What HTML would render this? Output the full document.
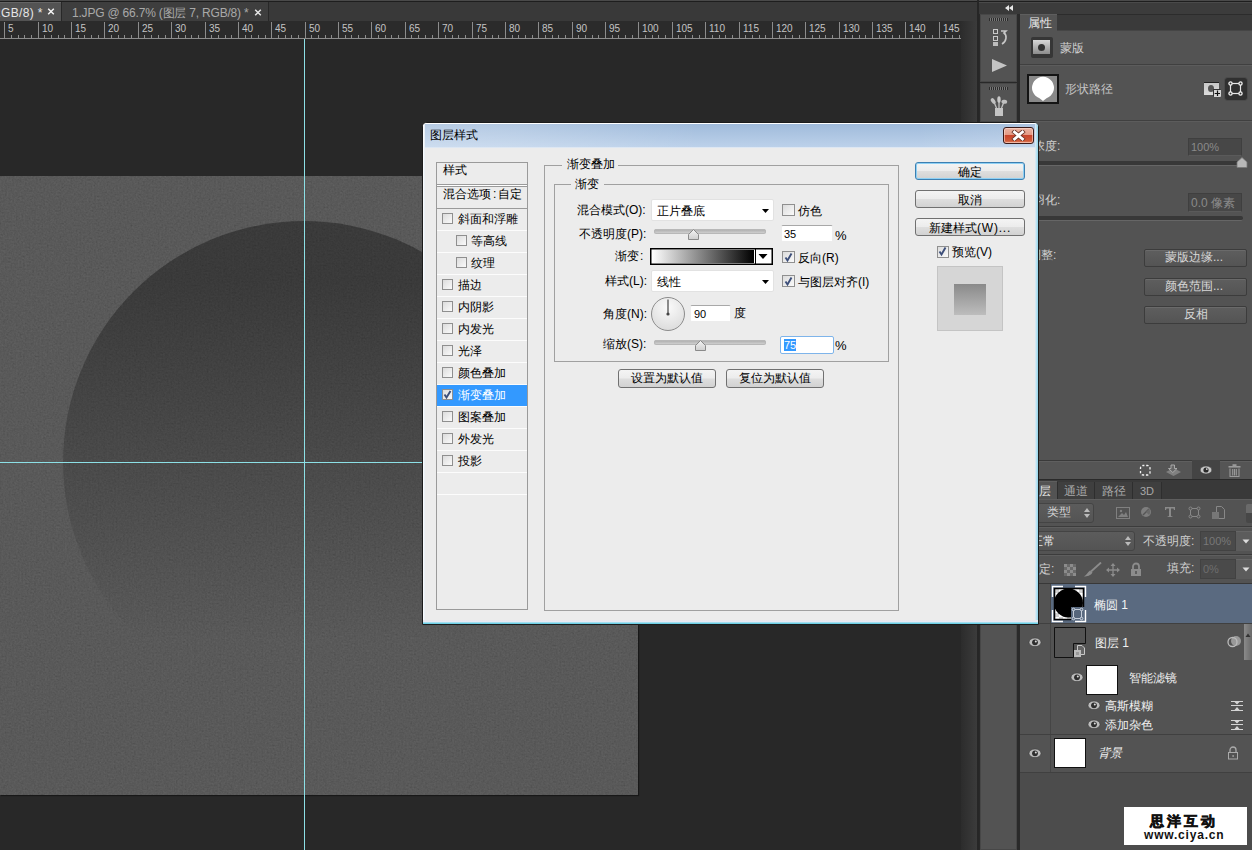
<!DOCTYPE html>
<html><head><meta charset="utf-8">
<style>
*{margin:0;padding:0;box-sizing:border-box}
html,body{width:1252px;height:850px;overflow:hidden;background:#282828;font-family:"Liberation Sans",sans-serif;font-size:12px;position:relative}
.a{position:absolute}
.t{position:absolute;white-space:nowrap;line-height:1}
.cb{position:absolute;width:11px;height:11px;border:1px solid #8f8f8f;background:linear-gradient(135deg,#dcdcdc,#fafafa)}
.dd{background:#fff;border:1px solid #e2e2e2;border-radius:2px}
.sl{background:linear-gradient(#a8a8a8,#d8d8d8);border-radius:3px;box-shadow:inset 0 0 0 1px #b8b8b8}
.inp{background:#fff;border:1px solid #ececec;border-top-color:#a8a8a8;border-radius:2px}
.wbtn{border:1px solid #707070;border-radius:3px;background:linear-gradient(#f4f4f4 0%,#ececec 48%,#dedede 52%,#d2d2d2 100%)}
.btn{background:linear-gradient(#5e5e5e,#545454);border:1px solid #3c3c3c;border-radius:2px;box-shadow:inset 0 1px 0 #6a6a6a}
</style></head><body>
<!-- top strip -->
<div class="a" style="left:0;top:0;width:1252px;height:1px;background:#4a4a4a"></div>
<div class="a" style="left:0;top:1px;width:1252px;height:1px;background:#1e1e1e"></div>
<!-- tab bar -->
<div class="a" id="tabbar" style="left:0;top:2px;width:977px;height:19px;background:#393939"></div>
<div class="a" style="left:0;top:2px;width:61px;height:19px;background:#535353;border-top:1px solid #646464"></div>
<div class="a" style="left:61px;top:2px;width:1px;height:19px;background:#282828"></div>
<div class="a" style="left:62px;top:2px;width:206px;height:19px;background:#3e3e3e"></div>
<div class="a" style="left:268px;top:2px;width:1px;height:19px;background:#282828"></div>
<div class="t" style="left:-8px;top:7px;font-size:12px;color:#e6e6e6;letter-spacing:0.35px">RGB/8) *</div>
<div class="t" style="left:72px;top:7px;font-size:12px;color:#a9a9a9;letter-spacing:-0.2px">1.JPG @ 66.7% (图层 7, RGB/8) *</div>
<svg class="a" style="left:47px;top:8px" width="8" height="7"><path d="M1.2 0.8L6.8 6.2M6.8 0.8L1.2 6.2" stroke="#f4f4f4" stroke-width="1.5"/></svg>
<svg class="a" style="left:254px;top:9px" width="8" height="7"><path d="M1.2 0.8L6.8 6.2M6.8 0.8L1.2 6.2" stroke="#e6e6e6" stroke-width="1.5"/></svg>
<!-- ruler -->
<div class="a" id="ruler" style="left:0;top:21px;width:961px;height:18px;background:#2b2b2b"></div>
<svg class="a" style="left:0;top:21px" width="961" height="18"><g fill="#8c8c8c"><rect x="4" y="1" width="1" height="16"/>
<rect x="11" y="14" width="1" height="3"/>
<rect x="18" y="14" width="1" height="3"/>
<rect x="24" y="14" width="1" height="3"/>
<rect x="31" y="14" width="1" height="3"/>
<text style="display:none" x="8" y="11">5</text>
<rect x="38" y="1" width="1" height="16"/>
<rect x="44" y="14" width="1" height="3"/>
<rect x="51" y="14" width="1" height="3"/>
<rect x="58" y="14" width="1" height="3"/>
<rect x="64" y="14" width="1" height="3"/>
<text style="display:none" x="42" y="11">10</text>
<rect x="71" y="1" width="1" height="16"/>
<rect x="78" y="14" width="1" height="3"/>
<rect x="84" y="14" width="1" height="3"/>
<rect x="91" y="14" width="1" height="3"/>
<rect x="98" y="14" width="1" height="3"/>
<text style="display:none" x="75" y="11">15</text>
<rect x="104" y="1" width="1" height="16"/>
<rect x="111" y="14" width="1" height="3"/>
<rect x="118" y="14" width="1" height="3"/>
<rect x="124" y="14" width="1" height="3"/>
<rect x="131" y="14" width="1" height="3"/>
<text style="display:none" x="108" y="11">20</text>
<rect x="138" y="1" width="1" height="16"/>
<rect x="144" y="14" width="1" height="3"/>
<rect x="151" y="14" width="1" height="3"/>
<rect x="158" y="14" width="1" height="3"/>
<rect x="165" y="14" width="1" height="3"/>
<text style="display:none" x="142" y="11">25</text>
<rect x="171" y="1" width="1" height="16"/>
<rect x="178" y="14" width="1" height="3"/>
<rect x="185" y="14" width="1" height="3"/>
<rect x="191" y="14" width="1" height="3"/>
<rect x="198" y="14" width="1" height="3"/>
<text style="display:none" x="175" y="11">30</text>
<rect x="205" y="1" width="1" height="16"/>
<rect x="211" y="14" width="1" height="3"/>
<rect x="218" y="14" width="1" height="3"/>
<rect x="225" y="14" width="1" height="3"/>
<rect x="231" y="14" width="1" height="3"/>
<text style="display:none" x="209" y="11">35</text>
<rect x="238" y="1" width="1" height="16"/>
<rect x="245" y="14" width="1" height="3"/>
<rect x="251" y="14" width="1" height="3"/>
<rect x="258" y="14" width="1" height="3"/>
<rect x="265" y="14" width="1" height="3"/>
<text style="display:none" x="242" y="11">40</text>
<rect x="271" y="1" width="1" height="16"/>
<rect x="278" y="14" width="1" height="3"/>
<rect x="285" y="14" width="1" height="3"/>
<rect x="291" y="14" width="1" height="3"/>
<rect x="298" y="14" width="1" height="3"/>
<text style="display:none" x="275" y="11">45</text>
<rect x="305" y="1" width="1" height="16"/>
<rect x="311" y="14" width="1" height="3"/>
<rect x="318" y="14" width="1" height="3"/>
<rect x="325" y="14" width="1" height="3"/>
<rect x="331" y="14" width="1" height="3"/>
<text style="display:none" x="309" y="11">50</text>
<rect x="338" y="1" width="1" height="16"/>
<rect x="345" y="14" width="1" height="3"/>
<rect x="351" y="14" width="1" height="3"/>
<rect x="358" y="14" width="1" height="3"/>
<rect x="365" y="14" width="1" height="3"/>
<text style="display:none" x="342" y="11">55</text>
<rect x="371" y="1" width="1" height="16"/>
<rect x="378" y="14" width="1" height="3"/>
<rect x="385" y="14" width="1" height="3"/>
<rect x="391" y="14" width="1" height="3"/>
<rect x="398" y="14" width="1" height="3"/>
<text style="display:none" x="375" y="11">60</text>
<rect x="405" y="1" width="1" height="16"/>
<rect x="411" y="14" width="1" height="3"/>
<rect x="418" y="14" width="1" height="3"/>
<rect x="425" y="14" width="1" height="3"/>
<rect x="432" y="14" width="1" height="3"/>
<text style="display:none" x="409" y="11">65</text>
<rect x="438" y="1" width="1" height="16"/>
<rect x="445" y="14" width="1" height="3"/>
<rect x="452" y="14" width="1" height="3"/>
<rect x="458" y="14" width="1" height="3"/>
<rect x="465" y="14" width="1" height="3"/>
<text style="display:none" x="442" y="11">70</text>
<rect x="472" y="1" width="1" height="16"/>
<rect x="478" y="14" width="1" height="3"/>
<rect x="485" y="14" width="1" height="3"/>
<rect x="492" y="14" width="1" height="3"/>
<rect x="498" y="14" width="1" height="3"/>
<text style="display:none" x="476" y="11">75</text>
<rect x="505" y="1" width="1" height="16"/>
<rect x="512" y="14" width="1" height="3"/>
<rect x="518" y="14" width="1" height="3"/>
<rect x="525" y="14" width="1" height="3"/>
<rect x="532" y="14" width="1" height="3"/>
<text style="display:none" x="509" y="11">80</text>
<rect x="538" y="1" width="1" height="16"/>
<rect x="545" y="14" width="1" height="3"/>
<rect x="552" y="14" width="1" height="3"/>
<rect x="558" y="14" width="1" height="3"/>
<rect x="565" y="14" width="1" height="3"/>
<text style="display:none" x="542" y="11">85</text>
<rect x="572" y="1" width="1" height="16"/>
<rect x="578" y="14" width="1" height="3"/>
<rect x="585" y="14" width="1" height="3"/>
<rect x="592" y="14" width="1" height="3"/>
<rect x="598" y="14" width="1" height="3"/>
<text style="display:none" x="576" y="11">90</text>
<rect x="605" y="1" width="1" height="16"/>
<rect x="612" y="14" width="1" height="3"/>
<rect x="618" y="14" width="1" height="3"/>
<rect x="625" y="14" width="1" height="3"/>
<rect x="632" y="14" width="1" height="3"/>
<text style="display:none" x="609" y="11">95</text>
<rect x="638" y="1" width="1" height="16"/>
<rect x="645" y="14" width="1" height="3"/>
<rect x="652" y="14" width="1" height="3"/>
<rect x="658" y="14" width="1" height="3"/>
<rect x="665" y="14" width="1" height="3"/>
<text style="display:none" x="642" y="11">100</text>
<rect x="672" y="1" width="1" height="16"/>
<rect x="678" y="14" width="1" height="3"/>
<rect x="685" y="14" width="1" height="3"/>
<rect x="692" y="14" width="1" height="3"/>
<rect x="699" y="14" width="1" height="3"/>
<text style="display:none" x="676" y="11">105</text>
<rect x="705" y="1" width="1" height="16"/>
<rect x="712" y="14" width="1" height="3"/>
<rect x="719" y="14" width="1" height="3"/>
<rect x="725" y="14" width="1" height="3"/>
<rect x="732" y="14" width="1" height="3"/>
<text style="display:none" x="709" y="11">110</text>
<rect x="739" y="1" width="1" height="16"/>
<rect x="745" y="14" width="1" height="3"/>
<rect x="752" y="14" width="1" height="3"/>
<rect x="759" y="14" width="1" height="3"/>
<rect x="765" y="14" width="1" height="3"/>
<text style="display:none" x="743" y="11">115</text>
<rect x="772" y="1" width="1" height="16"/>
<rect x="779" y="14" width="1" height="3"/>
<rect x="785" y="14" width="1" height="3"/>
<rect x="792" y="14" width="1" height="3"/>
<rect x="799" y="14" width="1" height="3"/>
<text style="display:none" x="776" y="11">120</text>
<rect x="805" y="1" width="1" height="16"/>
<rect x="812" y="14" width="1" height="3"/>
<rect x="819" y="14" width="1" height="3"/>
<rect x="825" y="14" width="1" height="3"/>
<rect x="832" y="14" width="1" height="3"/>
<text style="display:none" x="809" y="11">125</text>
<rect x="839" y="1" width="1" height="16"/>
<rect x="845" y="14" width="1" height="3"/>
<rect x="852" y="14" width="1" height="3"/>
<rect x="859" y="14" width="1" height="3"/>
<rect x="865" y="14" width="1" height="3"/>
<text style="display:none" x="843" y="11">130</text>
<rect x="872" y="1" width="1" height="16"/>
<rect x="879" y="14" width="1" height="3"/>
<rect x="885" y="14" width="1" height="3"/>
<rect x="892" y="14" width="1" height="3"/>
<rect x="899" y="14" width="1" height="3"/>
<text style="display:none" x="876" y="11">135</text>
<rect x="905" y="1" width="1" height="16"/>
<rect x="912" y="14" width="1" height="3"/>
<rect x="919" y="14" width="1" height="3"/>
<rect x="925" y="14" width="1" height="3"/>
<rect x="932" y="14" width="1" height="3"/>
<text style="display:none" x="909" y="11">140</text>
<rect x="939" y="1" width="1" height="16"/>
<rect x="945" y="14" width="1" height="3"/>
<rect x="952" y="14" width="1" height="3"/>
<rect x="959" y="14" width="1" height="3"/>
<text style="display:none" x="943" y="11">145</text></g>
<rect x="0" y="17" width="961" height="1" fill="#8c8c8c"/>
<g fill="#c4c4c4" font-family="Liberation Sans" font-size="10"><text x="8" y="11">5</text><text x="42" y="11">10</text><text x="75" y="11">15</text><text x="108" y="11">20</text><text x="142" y="11">25</text><text x="175" y="11">30</text><text x="209" y="11">35</text><text x="242" y="11">40</text><text x="275" y="11">45</text><text x="309" y="11">50</text><text x="342" y="11">55</text><text x="375" y="11">60</text><text x="409" y="11">65</text><text x="442" y="11">70</text><text x="476" y="11">75</text><text x="509" y="11">80</text><text x="542" y="11">85</text><text x="576" y="11">90</text><text x="609" y="11">95</text><text x="642" y="11">100</text><text x="676" y="11">105</text><text x="709" y="11">110</text><text x="743" y="11">115</text><text x="776" y="11">120</text><text x="809" y="11">125</text><text x="843" y="11">130</text><text x="876" y="11">135</text><text x="909" y="11">140</text><text x="943" y="11">145</text></g></svg>
<!-- canvas right scrollbar zone -->
<div class="a" style="left:961px;top:21px;width:16px;height:829px;background:linear-gradient(90deg,#2c2c2c,#3b3b3b)"></div>
<div class="a" style="left:977px;top:0;width:2px;height:850px;background:#262626"></div>
<!-- canvas image -->
<div class="a" id="img" style="left:0;top:176px;width:638px;height:619px;background:#414141;overflow:hidden;box-shadow:1px 1px 1px rgba(0,0,0,.4)">
  <svg class="a" style="left:0;top:0" width="639" height="619"><filter id="nz" x="0" y="0" width="100%" height="100%"><feTurbulence type="fractalNoise" baseFrequency="0.55" numOctaves="2" seed="3"/><feColorMatrix type="matrix" values="0.33 0.33 0.33 0 0  0.33 0.33 0.33 0 0  0.33 0.33 0.33 0 0  0 0 0 0 1"/></filter><rect width="639" height="619" filter="url(#nz)" opacity="0.2"/></svg>
  <div class="a" style="left:63px;top:45px;width:482px;height:482px;border-radius:50%;background:linear-gradient(rgba(0,0,0,.35) 12.45%,rgba(0,0,0,0) 87.55%)"></div>
</div>
<!-- guides -->
<div class="a" style="left:304px;top:39px;width:1px;height:811px;background:#8ce0e6"></div>
<div class="a" style="left:0;top:462px;width:961px;height:1px;background:#8ce0e6"></div>
<!-- icon strip -->
<div class="a" style="left:979px;top:2px;width:41px;height:12px;background:#393939"></div>
<svg class="a" style="left:1005px;top:5px" width="9" height="6"><path d="M0 3L4 0V6ZM4 3L8 0V6Z" fill="#e8e8e8"/></svg>
<div class="a" style="left:980px;top:14px;width:37px;height:68px;background:#535353;border:1px solid #474747"></div>
<div class="a" style="left:980px;top:83px;width:37px;height:39px;background:#535353;border:1px solid #474747"></div>
<div class="a" style="left:980px;top:123px;width:37px;height:727px;background:#535353;border:1px solid #474747"></div>
<svg class="a" style="left:980px;top:14px" width="37" height="110">
 <g fill="#2c2c2c"><rect x="9" y="4" width="19" height="3"/><rect x="9" y="73" width="19" height="3"/></g>
 <g fill="#777"><rect x="10" y="4" width="1" height="3"/><rect x="12" y="4" width="1" height="3"/><rect x="14" y="4" width="1" height="3"/><rect x="16" y="4" width="1" height="3"/><rect x="18" y="4" width="1" height="3"/><rect x="20" y="4" width="1" height="3"/><rect x="22" y="4" width="1" height="3"/><rect x="24" y="4" width="1" height="3"/><rect x="26" y="4" width="1" height="3"/>
 <rect x="10" y="73" width="1" height="3"/><rect x="12" y="73" width="1" height="3"/><rect x="14" y="73" width="1" height="3"/><rect x="16" y="73" width="1" height="3"/><rect x="18" y="73" width="1" height="3"/><rect x="20" y="73" width="1" height="3"/><rect x="22" y="73" width="1" height="3"/><rect x="24" y="73" width="1" height="3"/><rect x="26" y="73" width="1" height="3"/></g>
 <g fill="none" stroke="#c8c8c8" stroke-width="1"><rect x="13.5" y="15.5" width="4" height="4"/><rect x="13.5" y="22.5" width="4" height="4"/></g>
 <rect x="13" y="28" width="5" height="4" fill="#bdbdbd"/>
 <path d="M21 17H26L24 19C27 21 27 27 22 30" fill="none" stroke="#c8c8c8" stroke-width="1.6"/>
 <path d="M12 45L27 51.5L12 58Z" fill="#c4c4c4"/>
 <rect x="15" y="94" width="8" height="8" fill="#c4c4c4"/>
 <path d="M19 94V86M16.5 94L14 88M21.5 94L23.5 89" stroke="#c0c0c0" stroke-width="1.3"/>
 <ellipse cx="19" cy="85.5" rx="1.7" ry="3.2" fill="#c8c8c8"/>
 <ellipse cx="13.2" cy="87" rx="1.9" ry="3.2" fill="#c0c0c0" transform="rotate(-35 13.2 87)"/>
 <ellipse cx="24.3" cy="87.8" rx="2.9" ry="2" fill="#c0c0c0" transform="rotate(10 24.3 87.8)"/>
</svg>
<div class="a" style="left:1017px;top:14px;width:3px;height:836px;background:#2a2a2a"></div><div class="a" style="left:979px;top:2px;width:273px;height:1px;background:#4a4a4a"></div>
<!-- right panel -->
<div class="a" style="left:1020px;top:2px;width:232px;height:1px;background:#4a4a4a"></div>
<div class="a" style="left:1020px;top:3px;width:232px;height:11px;background:#3c3c3c"></div>
<div class="a" style="left:1020px;top:14px;width:232px;height:17px;background:#3a3a3a;border-top:1px solid #2c2c2c;border-bottom:1px solid #454545"></div>
<div class="a" style="left:1020px;top:14px;width:232px;height:836px;background:#535353;top:31px"></div>
<div class="a" style="left:1020px;top:14px;width:37px;height:17px;background:#535353;border-top:1px solid #5e5e5e"></div>
<div class="t" style="left:1028px;top:17px;color:#e8e8e8">属性</div>
<!-- mask icon -->
<div class="a" style="left:1031px;top:37px;width:22px;height:21px;background:#363636;border-radius:2px"></div>
<div class="a" style="left:1033px;top:40px;width:17px;height:14px;background:linear-gradient(#d8d8d8,#8c8c8c)"></div>
<div class="a" style="left:1038px;top:44px;width:7px;height:7px;border-radius:50%;background:#333"></div>
<div class="t" style="left:1060px;top:42px;color:#cfcfcf">蒙版</div>
<div class="a" style="left:1020px;top:64px;width:232px;height:1px;background:#404040"></div>
<div class="a" style="left:1020px;top:65px;width:232px;height:1px;background:#5c5c5c"></div>
<!-- shape thumb -->
<div class="a" style="left:1027px;top:74px;width:32px;height:30px;background:#898989;border:2px solid #141414"></div>
<svg class="a" style="left:1027px;top:74px" width="32" height="30"><path d="M16 27L12.5 24.2A11 11 0 1 1 19.5 24.2Z" fill="#fff"/></svg>
<div class="t" style="left:1065px;top:83px;color:#c4c4c4">形状路径</div>
<!-- add mask icon -->
<div class="a" style="left:1204px;top:82px;width:15px;height:13px;background:linear-gradient(#c8c8c8,#dcdcdc);border-top:1px solid #222"></div>
<div class="a" style="left:1208px;top:85px;width:6px;height:7px;border-radius:50%;background:#555"></div>
<div class="a" style="left:1213px;top:89px;width:8px;height:8px;background:#d6d6d6;border-radius:1px;border-left:1px solid #333;border-top:1px solid #333"></div>
<svg class="a" style="left:1213px;top:89px" width="8" height="8"><path d="M4.5 1.5V7M1.7 4.5H7" stroke="#111" stroke-width="1.2"/></svg>
<!-- vector mask icon -->
<div class="a" style="left:1225px;top:78px;width:22px;height:22px;background:#303030;border-radius:3px;box-shadow:0 0 0 1px #4a4a4a"></div>
<svg class="a" style="left:1225px;top:78px" width="22" height="22"><rect x="5.5" y="5.5" width="10" height="10" fill="none" stroke="#e6e6e6" stroke-width="1.2"/><g fill="#303030" stroke="#f0f0f0" stroke-width="1.3"><circle cx="5.5" cy="5.5" r="1.6"/><circle cx="15.5" cy="5.5" r="1.6"/><circle cx="5.5" cy="15.5" r="1.6"/><circle cx="15.5" cy="15.5" r="1.6"/></g></svg>
<div class="a" style="left:1020px;top:120px;width:232px;height:1px;background:#404040"></div>
<div class="a" style="left:1020px;top:121px;width:232px;height:1px;background:#5c5c5c"></div>
<!-- density / feather -->
<div class="t" style="left:1033px;top:140px;color:#cfcfcf">浓度:</div>
<div class="a" style="left:1188px;top:138px;width:54px;height:18px;background:#474747;border:1px solid #3f3f3f;border-bottom-color:#5a5a5a"></div>
<div class="t" style="left:1191px;top:142px;color:#8a8a8a;font-size:11px">100%</div>
<div class="a" style="left:1020px;top:161px;width:226px;height:5px;background:#383838;border-radius:2px;border-bottom:1px solid #666"></div>
<svg class="a" style="left:1236px;top:157px" width="12" height="11"><path d="M6 0.5L11 5V10.5H1V5Z" fill="#b8b8b8" stroke="#777" stroke-width="0.8"/></svg>
<div class="t" style="left:1033px;top:194px;color:#cfcfcf">羽化:</div>
<div class="a" style="left:1188px;top:193px;width:54px;height:19px;background:#474747;border:1px solid #3f3f3f;border-bottom-color:#5a5a5a"></div>
<div class="t" style="left:1191px;top:197px;color:#8a8a8a;font-size:12px">0.0 像素</div>
<div class="a" style="left:1020px;top:216px;width:223px;height:5px;background:#383838;border-radius:2px;border-bottom:1px solid #666"></div>
<div class="t" style="left:1029px;top:249px;color:#cfcfcf">调整:</div>
<div class="a btn" style="left:1144px;top:249px;width:103px;height:18px"></div>
<div class="t" style="left:1165px;top:251px;color:#d8d8d8">蒙版边缘...</div>
<div class="a btn" style="left:1144px;top:278px;width:103px;height:18px"></div>
<div class="t" style="left:1165px;top:280px;color:#d8d8d8">颜色范围...</div>
<div class="a btn" style="left:1144px;top:306px;width:103px;height:18px"></div>
<div class="t" style="left:1184px;top:308px;color:#d8d8d8">反相</div>

<!-- props bottom toolbar -->
<div class="a" style="left:1020px;top:460px;width:232px;height:19px;background:#555;border-top:1px solid #3a3a3a;box-shadow:inset 0 1px 0 #5f5f5f"></div>
<div class="a" style="left:1192px;top:460px;width:28px;height:19px;background:#444"></div>
<svg class="a" style="left:1139px;top:464px" width="13" height="12"><rect x="1.5" y="1.5" width="9.5" height="9.5" rx="2.5" fill="none" stroke="#f4f4f4" stroke-width="1.3" stroke-dasharray="2.4 1.8" stroke-dashoffset="1"/></svg>
<svg class="a" style="left:1165px;top:464px" width="17" height="13"><path d="M1 8L8.5 4L16 8L8.5 12Z" fill="#808080"/><path d="M6 1H9.5V4.5H12L7.8 8.5L3.5 4.5H6Z" fill="#666" stroke="#b0b0b0" stroke-width="0.9"/></svg>
<svg class="a" style="left:1199px;top:465px" width="14" height="10"><ellipse cx="7" cy="5" rx="5.8" ry="3.9" fill="#c8c8c8" stroke="#3a3a3a" stroke-width="0.5"/><circle cx="7" cy="5" r="2.6" fill="#2a2a2a"/><circle cx="7.8" cy="4.1" r="0.9" fill="#ddd"/></svg>
<svg class="a" style="left:1228px;top:464px" width="13" height="13"><g fill="#9a9a9a"><rect x="0.5" y="2" width="12" height="1.6"/><rect x="4.5" y="0.2" width="4" height="1.8"/></g><g fill="none" stroke="#9a9a9a" stroke-width="1.1"><path d="M2 4.5V12.5H11V4.5M4.7 5V11.5M6.5 5V11.5M8.3 5V11.5"/></g></svg>
<!-- layers tabs -->
<div class="a" style="left:1020px;top:479px;width:232px;height:20px;background:#393939;border-top:1px solid #2a2a2a"></div>
<div class="a" style="left:1020px;top:481px;width:37px;height:18px;background:#535353;border-top:1px solid #5e5e5e"></div>
<div class="a" style="left:1057px;top:482px;width:37px;height:17px;background:#3f3f3f;border-left:1px solid #2e2e2e"></div>
<div class="a" style="left:1094px;top:482px;width:38px;height:17px;background:#3f3f3f;border-left:1px solid #2e2e2e"></div>
<div class="a" style="left:1132px;top:482px;width:30px;height:17px;background:#3f3f3f;border-left:1px solid #2e2e2e;border-right:1px solid #2e2e2e"></div>
<div class="t" style="left:1027px;top:485px;color:#e8e8e8">图层</div>
<div class="t" style="left:1064px;top:485px;color:#a8a8a8">通道</div>
<div class="t" style="left:1102px;top:485px;color:#a8a8a8">路径</div>
<div class="t" style="left:1140px;top:486px;color:#a8a8a8;font-size:11px">3D</div>
<!-- filter row -->
<div class="a" style="left:1020px;top:499px;width:232px;height:28px;background:#535353;box-shadow:inset 0 1px 0 #5e5e5e"></div>
<div class="a" style="left:1020px;top:503px;width:74px;height:20px;background:linear-gradient(#5c5c5c,#545454);border:1px solid #444;border-radius:3px"></div>
<div class="t" style="left:1047px;top:506px;color:#d4d4d4">类型</div>
<svg class="a" style="left:1083px;top:507px" width="8" height="12"><path d="M4 1L7 5H1ZM4 11L7 7H1Z" fill="#bbb"/></svg>
<svg class="a" style="left:1115px;top:506px" width="16" height="14"><rect x="1.5" y="1.5" width="13" height="11" fill="none" stroke="#808080"/><path d="M3 11L7 7L9 9L11 6L13 11Z" fill="#808080"/><circle cx="6" cy="5" r="1.2" fill="#808080"/></svg>
<svg class="a" style="left:1140px;top:506px" width="12" height="12"><circle cx="6" cy="6" r="5" fill="#7e7e7e"/><path d="M3 9L9 3" stroke="#555" stroke-width="1.5"/><path d="M6 6L9 3A5 5 0 0 1 9 9Z" fill="#6a6a6a"/></svg>
<svg class="a" style="left:1164px;top:506px" width="12" height="12"><path d="M1 1H11V4H10L9.5 2.5H7V10L8.5 10.5V11H3.5V10.5L5 10V2.5H2.5L2 4H1Z" fill="#8a8a8a"/></svg>
<svg class="a" style="left:1188px;top:506px" width="13" height="13"><rect x="2.5" y="2.5" width="8" height="8" fill="none" stroke="#888"/><g fill="#535353" stroke="#888"><circle cx="2.5" cy="2.5" r="1.5"/><circle cx="10.5" cy="2.5" r="1.5"/><circle cx="2.5" cy="10.5" r="1.5"/><circle cx="10.5" cy="10.5" r="1.5"/></g></svg>
<svg class="a" style="left:1212px;top:506px" width="13" height="14"><path d="M4.5 0.5H9.5L12.5 3.5V12.5H4.5Z" fill="none" stroke="#888"/><rect x="0" y="6" width="7" height="7" fill="#777"/></svg>
<div class="a" style="left:1246px;top:504px;width:8px;height:19px;background:linear-gradient(#6a6a6a 50%,#474747 50%);border-radius:2px"></div>
<div class="a" style="left:1020px;top:526px;width:232px;height:1px;background:#3c3c3c"></div>
<div class="a" style="left:1020px;top:527px;width:232px;height:1px;background:#5e5e5e"></div>
<!-- blend row -->
<div class="a" style="left:1020px;top:531px;width:115px;height:20px;background:linear-gradient(#5c5c5c,#545454);border:1px solid #444;border-radius:3px"></div>
<div class="t" style="left:1031px;top:535px;color:#e4e4e4">正常</div>
<svg class="a" style="left:1124px;top:535px" width="8" height="12"><path d="M4 1L7 5H1ZM4 11L7 7H1Z" fill="#bbb"/></svg>
<div class="t" style="left:1143px;top:535px;color:#cfcfcf">不透明度:</div>
<div class="a" style="left:1200px;top:531px;width:36px;height:20px;background:#4a4a4a;border:1px solid #424242"></div>
<div class="t" style="left:1203px;top:536px;color:#787878;font-size:11px">100%</div>
<div class="a" style="left:1236px;top:531px;width:16px;height:20px;background:#5c5c5c;border-top:1px solid #666"></div>
<svg class="a" style="left:1242px;top:539px" width="8" height="5"><path d="M0.5 0.5H7.5L4 4.5Z" fill="#ddd"/></svg>
<div class="a" style="left:1020px;top:554px;width:232px;height:1px;background:#3c3c3c"></div>
<div class="a" style="left:1020px;top:555px;width:232px;height:1px;background:#5e5e5e"></div>
<!-- lock row -->
<div class="t" style="left:1027px;top:563px;color:#cfcfcf">锁定:</div>
<svg class="a" style="left:1064px;top:564px" width="12" height="12"><rect width="12" height="12" fill="#8c8c8c"/><g fill="#6a6a6a"><rect x="3" y="0" width="3" height="3"/><rect x="9" y="0" width="3" height="3"/><rect x="0" y="3" width="3" height="3"/><rect x="6" y="3" width="3" height="3"/><rect x="3" y="6" width="3" height="3"/><rect x="9" y="6" width="3" height="3"/><rect x="0" y="9" width="3" height="3"/><rect x="6" y="9" width="3" height="3"/></g></svg>
<svg class="a" style="left:1083px;top:562px" width="19" height="15"><path d="M18 0.5L8 9.5" stroke="#8c8c8c" stroke-width="1.8"/><path d="M1 14.5C4 14.5 8 13.5 9.5 10.5L7 8.5C5 10 4 12.5 1 14.5Z" fill="#8c8c8c"/></svg>
<svg class="a" style="left:1106px;top:563px" width="14" height="14"><path d="M7 1V13M1 7H13" stroke="#8c8c8c" stroke-width="1.3"/><path d="M7 0L9.5 3H4.5ZM7 14L9.5 11H4.5ZM0 7L3 4.5V9.5ZM14 7L11 4.5V9.5Z" fill="#8c8c8c"/></svg>
<svg class="a" style="left:1130px;top:562px" width="12" height="15"><path d="M3 7V4.5A3 3 0 0 1 9 4.5V7" fill="none" stroke="#8c8c8c" stroke-width="1.8"/><rect x="1" y="7" width="10" height="7" fill="#8c8c8c"/><rect x="5.2" y="9" width="1.6" height="3" fill="#555"/></svg>
<div class="t" style="left:1167px;top:562px;color:#cfcfcf">填充:</div>
<div class="a" style="left:1200px;top:559px;width:36px;height:20px;background:#4a4a4a;border:1px solid #424242"></div>
<div class="t" style="left:1203px;top:564px;color:#6e6e6e;font-size:11px">0%</div>
<div class="a" style="left:1236px;top:559px;width:16px;height:20px;background:#5c5c5c;border-top:1px solid #666"></div>
<svg class="a" style="left:1242px;top:567px" width="8" height="5"><path d="M0.5 0.5H7.5L4 4.5Z" fill="#ddd"/></svg>
<div class="a" style="left:1020px;top:583px;width:232px;height:1px;background:#383838"></div>
<!-- layer rows -->
<div class="a" style="left:1020px;top:584px;width:232px;height:266px;background:#4c4c4c"></div>
<div class="a" style="left:1020px;top:584px;width:232px;height:189px;background:#535353"></div>
<div class="a" style="left:1051px;top:584px;width:201px;height:39px;background:#5a6a80"></div>
<div class="a" style="left:1050px;top:584px;width:1px;height:189px;background:#454545"></div>
<div class="a" style="left:1020px;top:623px;width:232px;height:1px;background:#404040"></div>
<div class="a" style="left:1020px;top:734px;width:232px;height:1px;background:#404040"></div>
<div class="a" style="left:1020px;top:772px;width:232px;height:1px;background:#404040"></div>
<!-- ellipse 1 -->
<svg class="a" style="left:1051px;top:585px" width="36" height="38">
 <defs><pattern id="chk" width="8" height="8" patternUnits="userSpaceOnUse" x="4" y="4"><rect width="8" height="8" fill="#fff"/><rect width="4" height="4" fill="#d0d0d0"/><rect x="4" y="4" width="4" height="4" fill="#d0d0d0"/></pattern><clipPath id="tc"><rect x="4" y="4" width="28" height="30"/></clipPath></defs>
 <rect x="3.5" y="3.5" width="29" height="31" fill="url(#chk)" stroke="#000" stroke-width="1.5"/>
 <circle cx="17.5" cy="18" r="14.5" fill="#000" clip-path="url(#tc)"/>
 <rect x="20" y="22" width="14" height="14" fill="#5a6a80"/>
 <rect x="22.5" y="24.5" width="8" height="9" fill="#56667c" stroke="#c4ccd8"/>
 <g fill="#5a6a80" stroke="#d0d8e4"><circle cx="22.5" cy="24.5" r="1.3"/><circle cx="30.5" cy="24.5" r="1.3"/><circle cx="22.5" cy="33.5" r="1.3"/><circle cx="30.5" cy="33.5" r="1.3"/></g>
 <path d="M1.5 12V1.5H12M24 1.5H34.5V12M1.5 25V36.5H12M24 36.5H34.5V25" fill="none" stroke="#fff" stroke-width="1.4"/>
</svg>
<div class="t" style="left:1094px;top:599px;color:#f4f4f4">椭圆 1</div>
<!-- layer 1 -->
<svg class="a" style="left:1028px;top:637px" width="14" height="11"><ellipse cx="7" cy="5.3" rx="6" ry="4.3" fill="#bdbdbd" stroke="#3a3a3a" stroke-width="0.6"/><circle cx="7" cy="5.3" r="2.9" fill="#2e2e2e"/><circle cx="7.8" cy="4.4" r="1" fill="#ddd"/></svg>
<svg class="a" style="left:1054px;top:627px" width="33" height="31"><path d="M0.5 0.5H31.5V16.5H19.5V30.5H0.5Z" fill="#545454" stroke="#111"/><path d="M23.5 18.5H28L30.5 21V27.5H23.5Z" fill="#666" stroke="#c8c8c8"/><rect x="20" y="23" width="7" height="7" fill="#bdbdbd"/><rect x="22" y="25" width="3" height="3" fill="#999"/></svg>
<div class="t" style="left:1095px;top:637px;color:#f0f0f0">图层 1</div>
<svg class="a" style="left:1227px;top:635px" width="15" height="13"><circle cx="9" cy="6" r="5" fill="#999"/><circle cx="5.5" cy="7" r="4.5" fill="none" stroke="#bbb" stroke-width="1.3"/></svg>
<div class="a" style="left:1244px;top:624px;width:8px;height:36px;background:linear-gradient(90deg,#8a8a8a,#6a6a6a)"></div>
<svg class="a" style="left:1245px;top:633px" width="6" height="5"><path d="M3 0.5L5.5 4H0.5Z" fill="#333"/></svg>
<!-- smart filters -->
<svg class="a" style="left:1070px;top:672px" width="14" height="11"><ellipse cx="7" cy="5.3" rx="6" ry="4.3" fill="#bdbdbd" stroke="#3a3a3a" stroke-width="0.6"/><circle cx="7" cy="5.3" r="2.9" fill="#2e2e2e"/><circle cx="7.8" cy="4.4" r="1" fill="#ddd"/></svg>
<div class="a" style="left:1086px;top:665px;width:32px;height:30px;background:#fff;border:1px solid #111"></div>
<div class="t" style="left:1129px;top:672px;color:#f0f0f0">智能滤镜</div>
<svg class="a" style="left:1087px;top:700px" width="14" height="11"><ellipse cx="7" cy="5.3" rx="6" ry="4.3" fill="#bdbdbd" stroke="#3a3a3a" stroke-width="0.6"/><circle cx="7" cy="5.3" r="2.9" fill="#2e2e2e"/><circle cx="7.8" cy="4.4" r="1" fill="#ddd"/></svg>
<div class="t" style="left:1105px;top:700px;color:#f0f0f0">高斯模糊</div>
<svg class="a" style="left:1230px;top:700px" width="14" height="12"><g stroke="#d4d4d4" stroke-width="1"><path d="M1 1.5H13M1 5.5H13M1 10.5H13"/></g><path d="M4.5 2L7 4.5L9.5 2ZM4.5 10L7 7L9.5 10Z" fill="#d4d4d4"/></svg>
<svg class="a" style="left:1087px;top:719px" width="14" height="11"><ellipse cx="7" cy="5.3" rx="6" ry="4.3" fill="#bdbdbd" stroke="#3a3a3a" stroke-width="0.6"/><circle cx="7" cy="5.3" r="2.9" fill="#2e2e2e"/><circle cx="7.8" cy="4.4" r="1" fill="#ddd"/></svg>
<div class="t" style="left:1105px;top:719px;color:#f0f0f0">添加杂色</div>
<svg class="a" style="left:1230px;top:719px" width="14" height="12"><g stroke="#d4d4d4" stroke-width="1"><path d="M1 1.5H13M1 5.5H13M1 10.5H13"/></g><path d="M4.5 2L7 4.5L9.5 2ZM4.5 10L7 7L9.5 10Z" fill="#d4d4d4"/></svg>
<!-- background -->
<svg class="a" style="left:1028px;top:748px" width="14" height="11"><ellipse cx="7" cy="5.3" rx="6" ry="4.3" fill="#bdbdbd" stroke="#3a3a3a" stroke-width="0.6"/><circle cx="7" cy="5.3" r="2.9" fill="#2e2e2e"/><circle cx="7.8" cy="4.4" r="1" fill="#ddd"/></svg>
<div class="a" style="left:1054px;top:738px;width:32px;height:30px;background:#fff;border:1px solid #111"></div>
<div class="t" style="left:1098px;top:747px;color:#f0f0f0;font-style:italic">背景</div>
<svg class="a" style="left:1227px;top:746px" width="12" height="14"><path d="M3 6.5V4A3 3 0 0 1 9 4V6.5" fill="none" stroke="#aaa" stroke-width="1.3"/><rect x="1.5" y="6.5" width="9" height="6.5" fill="none" stroke="#aaa"/><rect x="5.5" y="9" width="1.2" height="2" fill="#aaa"/></svg>
<!-- watermark -->
<div class="a" style="left:1124px;top:807px;width:123px;height:38px;background:#fff"></div>
<div class="t" style="left:1150px;top:814px;color:#111;font-size:14px;font-weight:bold;letter-spacing:3px;-webkit-text-stroke:0.6px #111">思洋互动</div>
<div class="t" style="left:1144px;top:829px;color:#111;font-size:12px;font-weight:bold;letter-spacing:0.8px">www.ciya.cn</div>
<!-- dialog -->
<div class="a" id="dlg" style="left:422px;top:122px;width:617px;height:503px;background:#ececec;border:1px solid #1c1c1c;border-radius:5px 5px 0 0;overflow:hidden">
 <div class="a" style="left:0;top:0;width:615px;height:24px;background:linear-gradient(#a0bbdb,#bcd1ea);border-top:1px solid #fff;border-left:1px solid #fff"></div>
 <div class="a" style="left:0;top:1px;width:615px;height:23px;background:linear-gradient(90deg,rgba(255,255,255,.25) 0%,rgba(255,255,255,.2) 15%,rgba(255,255,255,0) 45%,rgba(255,255,255,0) 80%,rgba(255,255,255,.12) 100%)"></div>
 <div class="a" style="left:0;top:24px;width:615px;height:1px;background:#dde7f3"></div>
 <div class="a" style="left:0;top:0;width:2px;height:501px;background:linear-gradient(90deg,#fff,#e4ecf4)"></div>
 <div class="a" style="left:612px;top:0;width:3px;height:501px;background:linear-gradient(90deg,#e4ecf4,#8fd6ec)"></div>
 <div class="a" style="left:0;top:497px;width:615px;height:4px;background:linear-gradient(#ece6ea,#e8eaf4 40%,#7fd6ea 75%,#5cc8e0)"></div>
</div>
<div class="t" style="left:430px;top:129px;color:#000">图层样式</div>
<!-- close btn -->
<div class="a" style="left:1003px;top:127px;width:31px;height:17px;border:1px solid #3a1a18;border-radius:3px;background:linear-gradient(#eab4a4 0%,#e49a84 45%,#c8452c 50%,#d05a38 85%,#e08868 100%);box-shadow:inset 0 0 0 1px rgba(255,220,210,.6)"></div>
<svg class="a" style="left:1011px;top:130px" width="15" height="11"><path d="M3.5 2L7.5 5.3L11.5 2M3.5 9L7.5 5.7L11.5 9" stroke="#6a3428" stroke-width="4.4" fill="none" stroke-linecap="square"/><path d="M3.5 2L7.5 5.3L11.5 2M3.5 9L7.5 5.7L11.5 9" stroke="#fff" stroke-width="2.8" fill="none" stroke-linecap="square"/></svg>
<!-- style list -->
<div class="a" style="left:436px;top:162px;width:92px;height:448px;border:1px solid #9a9a9a;background:#ececec"></div>
<div class="t" style="left:443px;top:164px;color:#000">样式</div>
<div class="a" style="left:437px;top:184px;width:90px;height:3px;border-top:1px solid #9a9a9a;border-bottom:1px solid #9a9a9a;background:#fff"></div>
<div class="t" style="left:443px;top:188px;color:#000">混合选项<span style="margin:0 2px">:</span>自定</div>
<div class="a" style="left:437px;top:208px;width:90px;height:1px;background:#9a9a9a"></div>
<div class="a cb" style="left:442px;top:213px"></div>
<div class="t" style="left:458px;top:213px;color:#000">斜面和浮雕</div>
<div class="a cb" style="left:456px;top:235px"></div>
<div class="t" style="left:471px;top:235px;color:#000">等高线</div>
<div class="a cb" style="left:456px;top:257px"></div>
<div class="t" style="left:471px;top:257px;color:#000">纹理</div>
<div class="a cb" style="left:442px;top:279px"></div>
<div class="t" style="left:458px;top:279px;color:#000">描边</div>
<div class="a cb" style="left:442px;top:301px"></div>
<div class="t" style="left:458px;top:301px;color:#000">内阴影</div>
<div class="a cb" style="left:442px;top:323px"></div>
<div class="t" style="left:458px;top:323px;color:#000">内发光</div>
<div class="a cb" style="left:442px;top:345px"></div>
<div class="t" style="left:458px;top:345px;color:#000">光泽</div>
<div class="a cb" style="left:442px;top:367px"></div>
<div class="t" style="left:458px;top:367px;color:#000">颜色叠加</div>
<div class="a" style="left:437px;top:384px;width:90px;height:22px;background:#3399ff"></div>
<div class="a cb" style="left:442px;top:389px"></div><svg class="a" style="left:442px;top:389px" width="11" height="11"><path d="M2.5 5.5L4.5 8.5L8.5 2" fill="none" stroke="#3d4f7a" stroke-width="1.9"/></svg>
<div class="t" style="left:458px;top:389px;color:#fff">渐变叠加</div>
<div class="a cb" style="left:442px;top:411px"></div>
<div class="t" style="left:458px;top:411px;color:#000">图案叠加</div>
<div class="a cb" style="left:442px;top:433px"></div>
<div class="t" style="left:458px;top:433px;color:#000">外发光</div>
<div class="a cb" style="left:442px;top:455px"></div>
<div class="t" style="left:458px;top:455px;color:#000">投影</div>
<div class="a" style="left:437px;top:230px;width:90px;height:1px;background:#fcfcfc"></div>
<div class="a" style="left:437px;top:252px;width:90px;height:1px;background:#fcfcfc"></div>
<div class="a" style="left:437px;top:274px;width:90px;height:1px;background:#fcfcfc"></div>
<div class="a" style="left:437px;top:296px;width:90px;height:1px;background:#fcfcfc"></div>
<div class="a" style="left:437px;top:318px;width:90px;height:1px;background:#fcfcfc"></div>
<div class="a" style="left:437px;top:340px;width:90px;height:1px;background:#fcfcfc"></div>
<div class="a" style="left:437px;top:362px;width:90px;height:1px;background:#fcfcfc"></div>
<div class="a" style="left:437px;top:384px;width:90px;height:1px;background:#fcfcfc"></div>
<div class="a" style="left:437px;top:406px;width:90px;height:1px;background:#fcfcfc"></div>
<div class="a" style="left:437px;top:428px;width:90px;height:1px;background:#fcfcfc"></div>
<div class="a" style="left:437px;top:450px;width:90px;height:1px;background:#fcfcfc"></div>
<div class="a" style="left:437px;top:472px;width:90px;height:1px;background:#fcfcfc"></div>
<div class="a" style="left:437px;top:494px;width:90px;height:1px;background:#fcfcfc"></div>


<!-- group boxes -->
<div class="a" style="left:544px;top:165px;width:355px;height:446px;border:1px solid #a0a0a0"></div>
<div class="a" style="left:562px;top:158px;width:56px;height:14px;background:#ececec"></div>
<div class="t" style="left:567px;top:158px;color:#000">渐变叠加</div>
<div class="a" style="left:554px;top:184px;width:335px;height:178px;border:1px solid #a0a0a0"></div>
<div class="a" style="left:571px;top:177px;width:33px;height:14px;background:#ececec"></div>
<div class="t" style="left:575px;top:178px;color:#000">渐变</div>
<!-- row labels -->
<div class="t" style="left:577px;top:204px;color:#000">混合模式(O):</div>
<div class="t" style="left:579px;top:228px;color:#000">不透明度(P):</div>
<div class="t" style="left:615px;top:250px;color:#000">渐变<span style="margin-left:1px">:</span></div>
<div class="t" style="left:605px;top:275px;color:#000">样式(L):</div>
<div class="t" style="left:603px;top:308px;color:#000">角度(N):</div>
<div class="t" style="left:603px;top:338px;color:#000">缩放(S):</div>
<!-- dropdown 1 -->
<div class="a dd" style="left:651px;top:199px;width:123px;height:22px"></div>
<div class="t" style="left:657px;top:205px;color:#000">正片叠底</div>
<svg class="a" style="left:762px;top:209px" width="8" height="5"><path d="M0 0H7L3.5 4Z" fill="#000"/></svg>
<div class="a cb" style="left:782px;top:204px;width:13px;height:12px"></div>
<div class="t" style="left:798px;top:205px;color:#000">仿色</div>
<!-- slider 1 -->
<div class="a sl" style="left:654px;top:229px;width:112px;height:5px"></div>
<svg class="a" style="left:687px;top:228px" width="13" height="13"><path d="M6.5 1.5L11.5 6.5V11.5H1.5V6.5Z" fill="url(#thg)" stroke="#8a8a8a"/></svg>
<div class="a inp" style="left:781px;top:225px;width:52px;height:17px"></div>
<div class="t" style="left:784px;top:229px;color:#000;font-size:11px">35</div>
<div class="t" style="left:835px;top:229px;color:#000;font-size:13px">%</div>
<!-- gradient swatch -->
<div class="a" style="left:650px;top:248px;width:123px;height:17px;border:1px solid #000;box-shadow:inset 0 0 0 0.5px #000;background:#fff"></div>
<div class="a" style="left:652px;top:250px;width:102px;height:13px;background:linear-gradient(90deg,#fff,#000)"></div>
<div class="a" style="left:755px;top:249px;width:1px;height:15px;background:#000"></div>
<svg class="a" style="left:758px;top:254px" width="10" height="6"><path d="M0.5 0H9.5L5 5Z" fill="#000"/></svg>
<div class="a cb" style="left:782px;top:251px;width:13px;height:12px"></div>
<svg class="a" style="left:783px;top:252px" width="11" height="11"><path d="M2.5 5.5L4.5 8.5L8.5 1.5" fill="none" stroke="#3d4f7a" stroke-width="1.9"/></svg>
<div class="t" style="left:798px;top:252px;color:#000">反向(R)</div>
<!-- dropdown 2 -->
<div class="a dd" style="left:651px;top:270px;width:123px;height:22px"></div>
<div class="t" style="left:657px;top:276px;color:#000">线性</div>
<svg class="a" style="left:762px;top:280px" width="8" height="5"><path d="M0 0H7L3.5 4Z" fill="#000"/></svg>
<div class="a cb" style="left:782px;top:275px;width:13px;height:12px"></div>
<svg class="a" style="left:783px;top:276px" width="11" height="11"><path d="M2.5 5.5L4.5 8.5L8.5 1.5" fill="none" stroke="#3d4f7a" stroke-width="1.9"/></svg>
<div class="t" style="left:798px;top:276px;color:#000">与图层对齐(I)</div>
<!-- angle -->
<svg class="a" style="left:650px;top:296px" width="36" height="36"><defs><radialGradient id="dg" cx="50%" cy="30%" r="70%"><stop offset="0" stop-color="#fafafa"/><stop offset="1" stop-color="#dcdcdc"/></radialGradient><linearGradient id="thg" x1="0" y1="0" x2="0" y2="1"><stop offset="0" stop-color="#f4f4f4"/><stop offset="1" stop-color="#cfcfcf"/></linearGradient></defs><circle cx="18" cy="18" r="16.5" fill="url(#dg)" stroke="#8c8c8c"/><path d="M18 3.5V18" stroke="#444" stroke-width="1.2"/><circle cx="18" cy="18" r="1.6" fill="#444"/></svg>
<div class="a inp" style="left:690px;top:305px;width:41px;height:17px"></div>
<div class="t" style="left:694px;top:309px;color:#000;font-size:11px">90</div>
<div class="t" style="left:734px;top:307px;color:#000">度</div>
<!-- slider 2 -->
<div class="a sl" style="left:654px;top:340px;width:112px;height:5px"></div>
<svg class="a" style="left:694px;top:339px" width="13" height="13"><path d="M6.5 1.5L11.5 6.5V11.5H1.5V6.5Z" fill="url(#thg)" stroke="#8a8a8a"/></svg>
<div class="a" style="left:780px;top:336px;width:54px;height:18px;background:#fff;border:1px solid #7eb4ea;border-radius:2px"></div>
<div class="a" style="left:784px;top:339px;width:12px;height:12px;background:#3399ff"></div>
<div class="t" style="left:784px;top:340px;color:#fff;font-size:11px">75</div>
<div class="t" style="left:835px;top:339px;color:#000;font-size:13px">%</div>
<!-- default buttons -->
<div class="a wbtn" style="left:618px;top:369px;width:98px;height:19px"></div>
<div class="t" style="left:631px;top:372px;color:#000">设置为默认值</div>
<div class="a wbtn" style="left:726px;top:369px;width:98px;height:19px"></div>
<div class="t" style="left:739px;top:372px;color:#000">复位为默认值</div>
<!-- right buttons -->
<div class="a wbtn" style="left:915px;top:162px;width:110px;height:18px;border-color:#3c7fb1;box-shadow:inset 0 0 0 1px #8ed0f4"></div>
<div class="t" style="left:958px;top:166px;color:#000">确定</div>
<div class="a wbtn" style="left:915px;top:190px;width:110px;height:18px"></div>
<div class="t" style="left:958px;top:194px;color:#000">取消</div>
<div class="a wbtn" style="left:915px;top:218px;width:110px;height:18px"></div>
<div class="t" style="left:929px;top:222px;color:#000">新建样式<span style="letter-spacing:0.8px">(W)...</span></div>
<div class="a cb" style="left:937px;top:246px;width:12px;height:12px"></div>
<svg class="a" style="left:937px;top:246px" width="11" height="11"><path d="M2.5 5.5L4.5 8.5L8.5 1.5" fill="none" stroke="#3d4f7a" stroke-width="1.9"/></svg>
<div class="t" style="left:952px;top:246px;color:#000">预览(V)</div>
<div class="a" style="left:937px;top:266px;width:66px;height:65px;background:#d6d6d6;border:1px solid #c4c4c4"></div>
<div class="a" style="left:954px;top:284px;width:32px;height:31px;background:linear-gradient(#8a8a8a,#bdbdbd)"></div>
</body></html>
